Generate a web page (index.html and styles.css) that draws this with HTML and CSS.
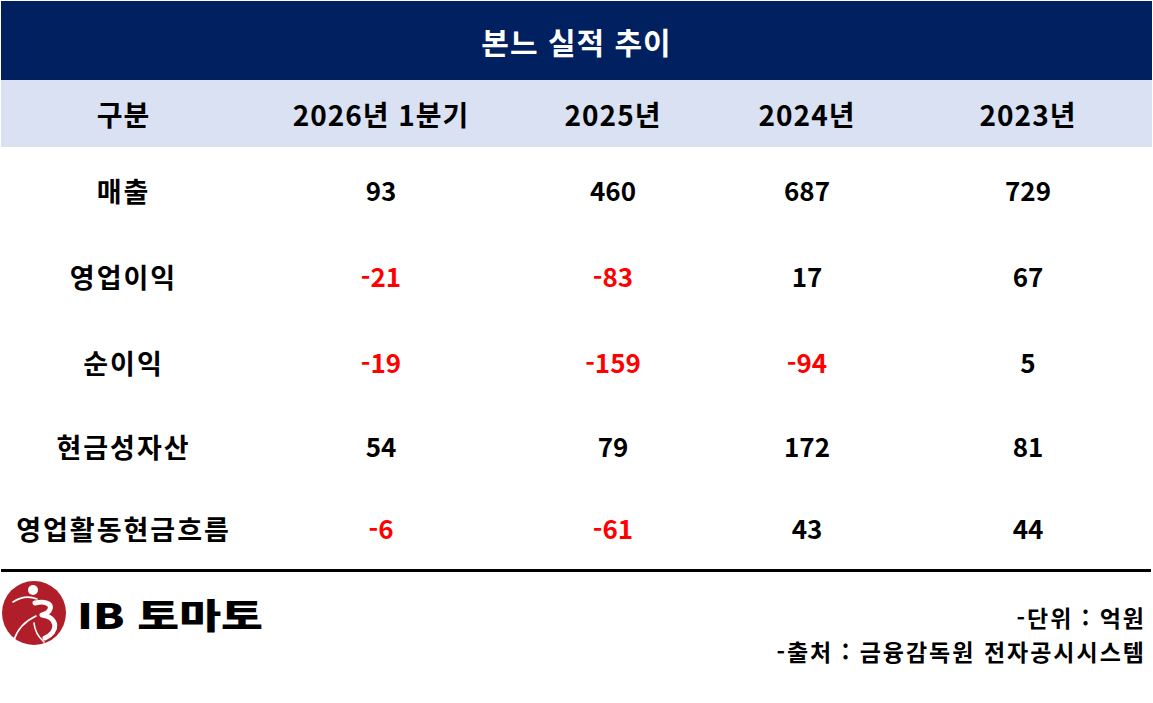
FILE: index.html
```html
<!DOCTYPE html>
<html lang="ko">
<head>
<meta charset="utf-8">
<title>본느 실적 추이</title>
<link rel="stylesheet" href="styles.css">
</head>
<body>
<div class="page">
  <div class="title">본느 실적 추이</div>
  <div class="table">
    <div class="row head">
      <div class="cell">구분</div>
      <div class="cell">2026년 1분기</div>
      <div class="cell">2025년</div>
      <div class="cell">2024년</div>
      <div class="cell">2023년</div>
    </div>
    <div class="row r1">
      <div class="cell label">매출</div>
      <div class="cell">93</div>
      <div class="cell">460</div>
      <div class="cell">687</div>
      <div class="cell">729</div>
    </div>
    <div class="row r2">
      <div class="cell label">영업이익</div>
      <div class="cell neg">-21</div>
      <div class="cell neg">-83</div>
      <div class="cell">17</div>
      <div class="cell">67</div>
    </div>
    <div class="row r3">
      <div class="cell label">순이익</div>
      <div class="cell neg">-19</div>
      <div class="cell neg">-159</div>
      <div class="cell neg">-94</div>
      <div class="cell">5</div>
    </div>
    <div class="row r4">
      <div class="cell label">현금성자산</div>
      <div class="cell">54</div>
      <div class="cell">79</div>
      <div class="cell">172</div>
      <div class="cell">81</div>
    </div>
    <div class="row r5">
      <div class="cell label">영업활동현금흐름</div>
      <div class="cell neg">-6</div>
      <div class="cell neg">-61</div>
      <div class="cell">43</div>
      <div class="cell">44</div>
    </div>
  </div>
  <div class="rule"></div>
  <div class="footer">
    <div class="logo">
      <svg class="mark" width="66" height="70" viewBox="0 0 66 70" aria-hidden="true">
        <circle cx="33" cy="35" r="32" fill="#b01f29"/>
        <circle cx="32" cy="12" r="5" fill="#fff"/>
        <path d="M12 24 Q24 16 36 21" fill="none" stroke="#fff" stroke-width="1.6" stroke-linecap="round"/>
        <path d="M34 25 C47 22 54 28 46 35 L41 37 C57 39 58 54 44 60" fill="none" stroke="#fff" stroke-width="5" stroke-linecap="round" stroke-linejoin="round"/>
        <path d="M13 62 Q18 46 35 38" fill="none" stroke="#fff" stroke-width="1.6" stroke-linecap="round"/>
        <path d="M33 45 Q34 56 43 64" fill="none" stroke="#fff" stroke-width="1.6" stroke-linecap="round"/>
      </svg>
      <span class="logo-text">IB 토마토</span>
    </div>
    <div class="notes">
      <div class="note">-단위 : 억원</div>
      <div class="note">-출처 : 금융감독원 전자공시시스템</div>
    </div>
  </div>
</div>
</body>
</html>
```
FILE: styles.css
```css
html, body {
  margin: 0;
  padding: 0;
  background: #fff;
}
.page {
  width: 1153px;
  height: 703px;
  padding-top: 1px;
  box-sizing: border-box;
  font-family: "Noto Sans CJK KR", "Noto Sans", sans-serif;
  font-weight: 700;
  color: #000;
}
.title {
  margin: 0 1px 0 1px;
  height: 79px;
  background: #002060;
  color: #fff;
  font-size: 30px;
  display: flex;
  align-items: center;
  justify-content: center;
  line-height: 1;
  letter-spacing: 1px;
}
.table {
  margin: 0 1px;
}
.row {
  display: grid;
  grid-template-columns: 245px 270px 194px 194px 248px;
  font-size: 26px;
  line-height: 1;
}
.cell {
  display: flex;
  align-items: center;
  justify-content: center;
}
.label {
  font-size: 27px;
  letter-spacing: 2px;
}
.head {
  height: 67px;
  background: #d9e1f2;
  font-size: 28px;
  letter-spacing: 1px;
}
.r1 { height: 86px; }
.r2 { height: 86px; }
.r3 { height: 86px; }
.r4 { height: 82px; }
.r5 { height: 82px; }
.neg {
  color: #ff0000;
}
.rule {
  margin: 0 2px 0 1px;
  height: 3px;
  background: #000;
}
.footer {
  display: flex;
  justify-content: space-between;
  align-items: flex-start;
  padding: 6px 7px 0 1px;
}
.logo {
  display: flex;
  align-items: center;
  gap: 10px;
}
.mark {
  display: block;
}
.logo-text {
  display: inline-block;
  font-size: 35px;
  font-weight: 900;
  line-height: 1;
  transform: scaleX(1.3);
  transform-origin: left center;
}
.notes {
  display: flex;
  flex-direction: column;
  align-items: flex-end;
  padding-top: 28px;
  gap: 11px;
}
.note {
  font-size: 23px;
  line-height: 1;
  letter-spacing: 2px;
}
```
